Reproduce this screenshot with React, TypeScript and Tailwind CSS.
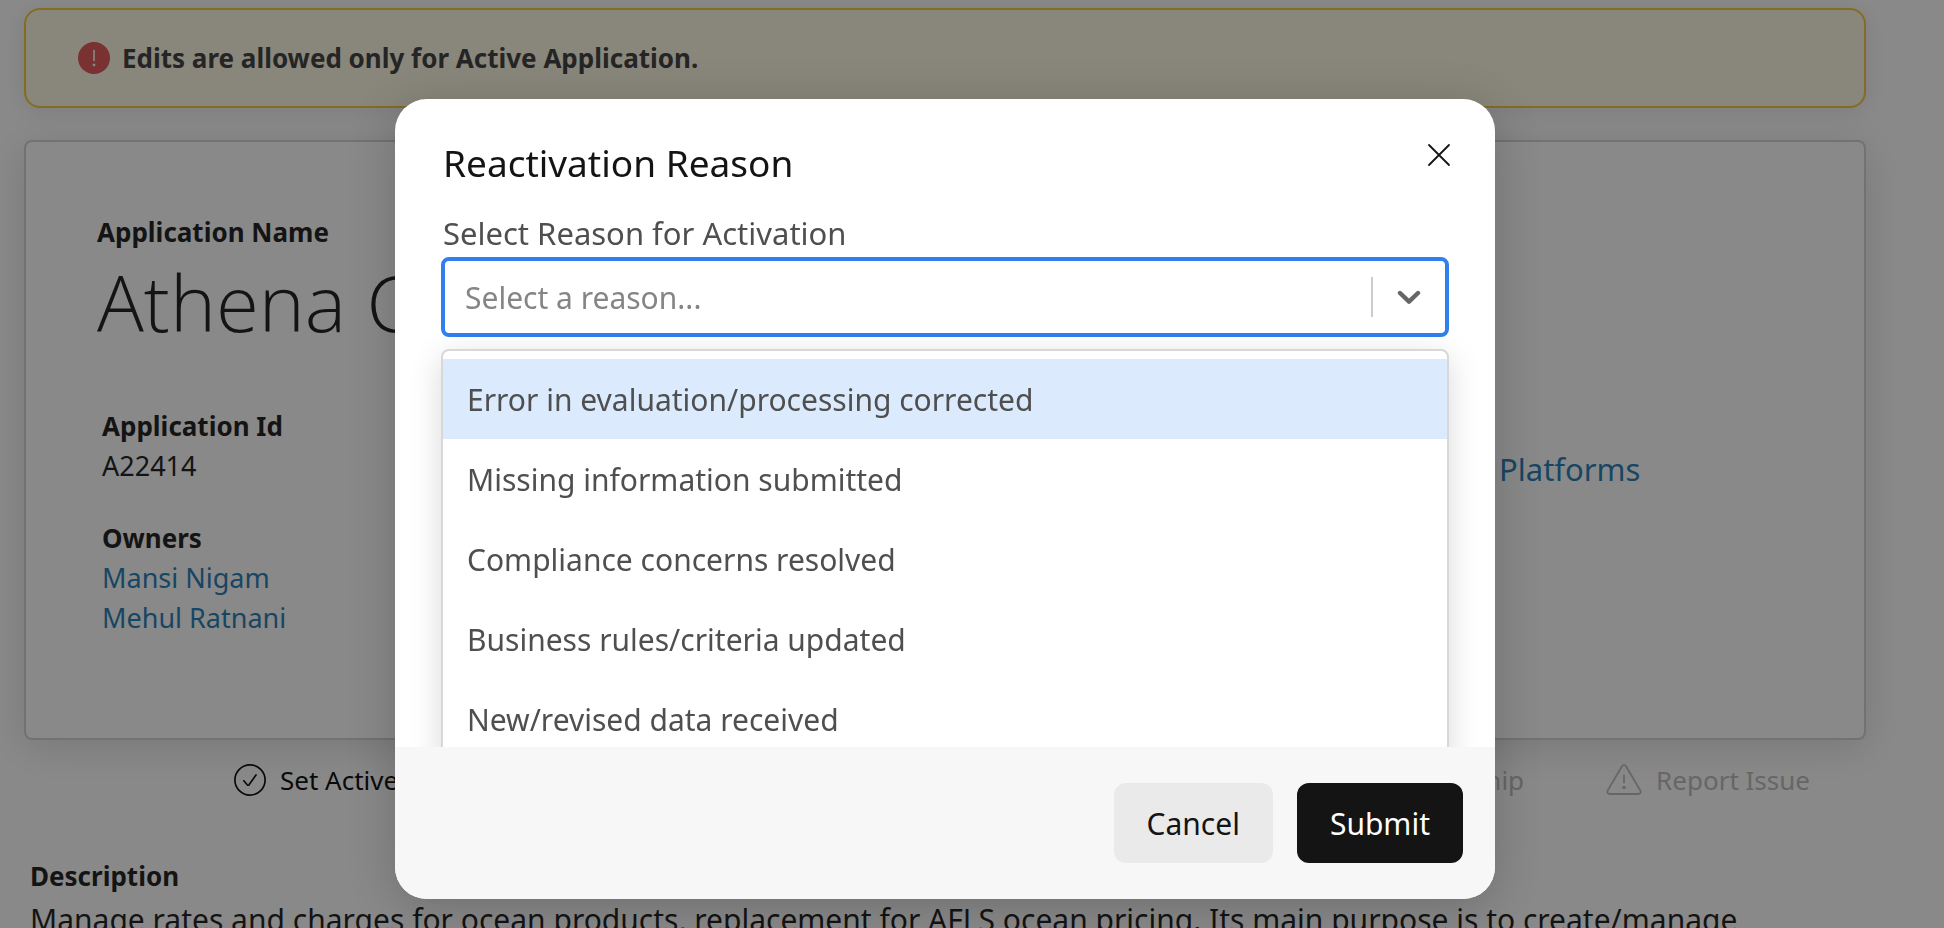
import { useState } from 'react';

const REASONS = [
  'Error in evaluation/processing corrected',
  'Missing information submitted',
  'Compliance concerns resolved',
  'Business rules/criteria updated',
  'New/revised data received',
];

const OWNERS = ['Mansi Nigam', 'Mehul Ratnani'];

function CheckCircleIcon() {
  return (
    <svg className="size-8" viewBox="0 0 32 32" fill="none" stroke="currentColor" strokeWidth="1.7" strokeLinecap="round" strokeLinejoin="round" aria-hidden="true">
      <circle cx="16" cy="16" r="15.1" />
      <path d="M9.8 16.8 L13.2 20.8 Q14.2 21.8 15.2 20.6 L22 11" />
    </svg>
  );
}

function WarningIcon() {
  return (
    <svg className="h-8 w-9" viewBox="0 0 36 32" fill="none" stroke="currentColor" strokeWidth="1.8" strokeLinecap="round" strokeLinejoin="round" aria-hidden="true">
      <path d="M16 2.2 Q18 -0.4 20 2.2 L34.4 26.6 Q35.4 29.6 32.6 30 H3.4 Q0.6 29.6 1.6 26.6 Z" />
      <path d="M18 11.5 V18.5" />
      <rect x="17.3" y="22.8" width="1.4" height="1.4" fill="currentColor" />
    </svg>
  );
}

function AlertBanner() {
  return (
    <div role="alert" className="flex h-[100px] items-center gap-3 rounded-2xl border-2 border-[#f5c52f] bg-[#fff8e2] px-13 shadow-[0_4px_24px_rgba(0,0,0,0.1)]">
      <svg className="size-8" viewBox="0 0 32 32" aria-hidden="true">
        <circle cx="16" cy="16" r="16" fill="#e04e4e" />
        <path d="M16 8.5 V18.5" stroke="#fff" strokeWidth="1.6" strokeLinecap="round" />
        <rect x="14.8" y="21.8" width="2.4" height="2.4" fill="#fff" />
      </svg>
      <p className="text-[26px] font-bold text-[#363636]">Edits are allowed only for Active Application.</p>
    </div>
  );
}

function ApplicationCard() {
  return (
    <section className="flex h-[600px] justify-between rounded-lg border-2 border-[#d0d0d0] bg-white px-[71px] pt-[70px] shadow-[0_8px_40px_rgba(0,0,0,0.14)]">
      <div>
        <h2 className="text-[26px] leading-10 font-bold">Application Name</h2>
        <p className="font-['Open_Sans',sans-serif] text-[78px] leading-[100px] font-light">Athena C</p>
        <dl className="mt-[54px] px-[5px] text-[27px] leading-10">
          <dt className="text-[26px] font-bold">Application Id</dt>
          <dd>A22414</dd>
          <dt className="mt-8 text-[26px] font-bold">Owners</dt>
          {OWNERS.map(owner => (
            <dd key={owner}>
              <a href="#" className="text-[#1a78b2]">{owner}</a>
            </dd>
          ))}
        </dl>
      </div>
      <div className="w-[294px] pt-[233px]">
        <a href="#" className="text-[31px] leading-12 text-[#1a78b2]">Platforms</a>
      </div>
    </section>
  );
}

function ActionBar() {
  return (
    <div className="flex h-20 items-center justify-between pr-14 pl-[210px] text-[26px]">
      <button type="button" className="flex items-center gap-3.5 text-black">
        <CheckCircleIcon />
        Set Active
      </button>
      <div className="flex items-center gap-[82px] text-[#b8b8b8]">
        <button type="button" disabled>Ownership</button>
        <button type="button" disabled className="flex items-center gap-3.5">
          <WarningIcon />
          Report Issue
        </button>
      </div>
    </div>
  );
}

function ReasonSelect() {
  const [open, setOpen] = useState(true);
  const [reason, setReason] = useState('');
  const [active, setActive] = useState(0);

  const choose = (value: string) => {
    setReason(value);
    setOpen(false);
  };

  return (
    <div className="relative">
      <label htmlFor="reason" className="block px-0.5 text-[31px] leading-10 text-[#4f4f4f]">
        Select Reason for Activation
      </label>
      <div className="relative mt-1">
        <select
          id="reason"
          value={reason}
          onChange={e => choose(e.target.value)}
          onMouseDown={e => {
            e.preventDefault();
            setOpen(!open);
          }}
          className="h-20 w-full appearance-none rounded-lg border-4 border-[#2f80ed] bg-white px-5 text-[30px] text-[#858585] outline-none"
        >
          <option value="" disabled>Select a reason...</option>
          {REASONS.map(r => (
            <option key={r} value={r}>{r}</option>
          ))}
        </select>
        <div className="pointer-events-none absolute inset-y-5 right-0 flex w-[78px] items-center justify-center border-l-2 border-[#cccccc] pr-1">
          <svg className="h-4 w-6" viewBox="0 0 24 16" fill="none" stroke="#666666" strokeWidth="4.4" strokeLinecap="round" strokeLinejoin="round" aria-hidden="true">
            <path d="M3 4 L12 12.7 L21 4" />
          </svg>
        </div>
      </div>
      {open && (
        <ul role="listbox" className="absolute inset-x-0 top-full mt-3 rounded-lg border-2 border-[#d8d8d8] bg-white py-2 shadow-[0_8px_32px_rgba(0,0,0,0.15)]">
          {REASONS.map((r, i) => (
            <li
              key={r}
              role="option"
              aria-selected={i === active}
              onMouseEnter={() => setActive(i)}
              onClick={() => choose(r)}
              className={`flex h-20 items-center px-6 text-[30px] text-[#4f4f4f] ${i === active ? 'bg-[#dceafd]' : ''}`}
            >
              {r}
            </li>
          ))}
        </ul>
      )}
    </div>
  );
}

function ReactivationModal({ onClose }: { onClose: () => void }) {
  return (
    <div className="fixed inset-0 flex items-end justify-center bg-[#141414]/50 pr-[54px] pb-[29px]">
      <div
        role="dialog"
        aria-modal="true"
        aria-labelledby="modal-title"
        className="w-full max-w-[1100px] overflow-hidden rounded-[32px] bg-white shadow-[0_8px_48px_rgba(0,0,0,0.2)]"
      >
        <div className="h-[648px] overflow-hidden px-[46px] pt-9">
          <div className="mb-[22px] flex h-14 items-start justify-between px-0.5">
            <h1 id="modal-title" className="text-[37px] leading-14 text-[#141414]">Reactivation Reason</h1>
            <button type="button" aria-label="Close" onClick={onClose} className="-mr-3 p-2">
              <svg className="size-6" viewBox="0 0 24 24" fill="none" stroke="#141414" strokeWidth="1.8" strokeLinecap="round" aria-hidden="true">
                <path d="M2 2 L22 22 M22 2 L2 22" />
              </svg>
            </button>
          </div>
          <ReasonSelect />
        </div>
        <div className="flex justify-end gap-6 bg-[#f7f7f7] px-8 py-9 text-[30px]">
          <button type="button" onClick={onClose} className="h-20 rounded-xl bg-[#eaeaea] px-[33px] text-[#141414]">Cancel</button>
          <button type="button" className="h-20 rounded-xl bg-[#141414] px-[33px] text-white">Submit</button>
        </div>
      </div>
    </div>
  );
}

export default function App() {
  const [showModal, setShowModal] = useState(true);

  return (
    <div className="h-screen overflow-hidden bg-white pt-2 pr-[78px] pl-6 font-['Noto_Sans',sans-serif] text-[#141414]">
      <main className="flex flex-col">
        <AlertBanner />
        <div className="mt-8">
          <ApplicationCard />
        </div>
        <ActionBar />
        <section className="mt-9 px-1.5">
          <h2 className="text-[26px] leading-10 font-bold">Description</h2>
          <p className="text-[30px] leading-12 whitespace-nowrap">
            Manage rates and charges for ocean products, replacement for AFLS ocean pricing. Its main purpose is to create/manage
          </p>
        </section>
      </main>
      {showModal && <ReactivationModal onClose={() => setShowModal(false)} />}
    </div>
  );
}
